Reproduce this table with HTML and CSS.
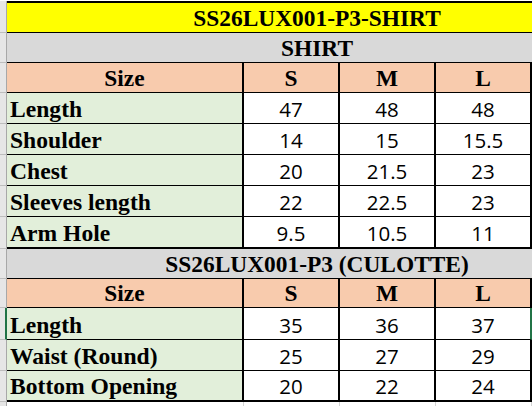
FILE: index.html
```html
<!DOCTYPE html>
<html>
<head>
<meta charset="utf-8">
<title>SS26LUX001-P3 size chart</title>
<link rel="stylesheet" href="styles.css">
</head>
<body>
<table class="sheet">
  <colgroup>
    <col class="c-rh"><col class="c-lab"><col class="c-num"><col class="c-num"><col class="c-num">
  </colgroup>
  <tr class="r-title"><td class="rh"></td><td class="title" colspan="4">SS26LUX001-P3-SHIRT</td></tr>
  <tr class="r-hdr"><td class="rh"></td><td class="sec" colspan="4">SHIRT</td></tr>
  <tr class="r-hdr"><td class="rh"></td><td class="hd">Size</td><td class="hd">S</td><td class="hd">M</td><td class="hd">L</td></tr>
  <tr class="r-data"><td class="rh"></td><td class="lab">Length</td><td class="num">47</td><td class="num">48</td><td class="num">48</td></tr>
  <tr class="r-data"><td class="rh"></td><td class="lab">Shoulder</td><td class="num">14</td><td class="num">15</td><td class="num">15.5</td></tr>
  <tr class="r-data"><td class="rh"></td><td class="lab">Chest</td><td class="num">20</td><td class="num">21.5</td><td class="num">23</td></tr>
  <tr class="r-data"><td class="rh"></td><td class="lab">Sleeves length</td><td class="num">22</td><td class="num">22.5</td><td class="num">23</td></tr>
  <tr class="r-data r-end"><td class="rh"></td><td class="lab">Arm Hole</td><td class="num">9.5</td><td class="num">10.5</td><td class="num">11</td></tr>
  <tr class="r-hdr"><td class="rh"></td><td class="sec" colspan="4">SS26LUX001-P3 (CULOTTE)</td></tr>
  <tr class="r-hdr2"><td class="rh"></td><td class="hd">Size</td><td class="hd">S</td><td class="hd">M</td><td class="hd">L</td></tr>
  <tr class="r-data r-tall"><td class="rh rh-sel"></td><td class="lab">Length</td><td class="num">35</td><td class="num">36</td><td class="num sel">37</td></tr>
  <tr class="r-data"><td class="rh"></td><td class="lab">Waist (Round)</td><td class="num">25</td><td class="num">27</td><td class="num">29</td></tr>
  <tr class="r-data r-short r-end"><td class="rh"></td><td class="lab">Bottom Opening</td><td class="num">20</td><td class="num">22</td><td class="num">24</td></tr>
  <tr class="r-grid"><td class="rh"></td><td class="g"></td><td class="g"></td><td class="g"></td><td class="g"></td></tr>
</table>
</body>
</html>
```

FILE: styles.css
```css
html, body {
  margin: 0;
  padding: 0;
  background: #ffffff;
  overflow: hidden;
}

body {
  width: 532px;
  height: 406px;
  padding-top: 1px;
  box-sizing: border-box;
}

.sheet {
  border-collapse: separate;
  border-spacing: 0;
  table-layout: fixed;
  width: 532px;
}

.c-rh { width: 7px; }
.c-lab { width: 237px; }
.c-num { width: 96px; }

.sheet td {
  padding: 0 0 2px 0;
  vertical-align: bottom;
  line-height: 24px;
  white-space: nowrap;
}

/* row header strip */
.sheet td.rh {
  background: #e6e6e6;
  border-right: 1px solid #a8a8a8;
  border-bottom: 1px solid #bdbdbd;
  padding: 0;
}
.sheet td.rh-sel {
  border-right: 2px solid #217346;
}

/* row heights (content incl. bottom padding) */
.r-title td { height: 27px; }
.r-hdr td { height: 27px; }
.r-hdr2 td { height: 26px; }
.r-data td { height: 28px; }
.r-tall td { height: 29px; }
.r-short td { height: 27px; }
.r-grid td { height: 5px; padding: 0; }

.sheet td.title,
.sheet td.sec {
  padding-left: 95px;
  font-family: "Liberation Serif", "Times New Roman", serif;
  font-weight: bold;
  font-size: 23.4px;
  text-align: center;
  color: #000;
  border-bottom: 1px solid #000;
}

.sheet td.title {
  background: #ffff00;
  border-top: 2px solid #000;
}

.sheet td.sec {
  background: #d9d9d9;
}

.hd {
  background: #f8cbad;
  border-right: 2px solid #000;
  border-bottom: 1px solid #000;
  font-family: "Liberation Serif", "Times New Roman", serif;
  font-weight: bold;
  font-size: 23.4px;
  text-align: center;
  color: #000;
}

.sheet td.lab {
  background: #e2efda;
  border-right: 2px solid #000;
  border-bottom: 1px solid #000;
  font-family: "Liberation Serif", "Times New Roman", serif;
  font-weight: bold;
  font-size: 23.6px;
  text-align: left;
  padding-left: 3px;
  color: #000;
}

.num {
  background: #ffffff;
  border-right: 2px solid #000;
  border-bottom: 1px solid #000;
  font-family: "Open Sans", "Liberation Sans", sans-serif;
  font-size: 20.5px;
  text-align: center;
  color: #000;
}

.num.sel {
  border-right-color: #217346;
}

.r-end td.lab,
.r-end td.num {
  border-bottom-width: 2px;
}

.g {
  border-right: 1px solid #d4d4d4;
}
```
